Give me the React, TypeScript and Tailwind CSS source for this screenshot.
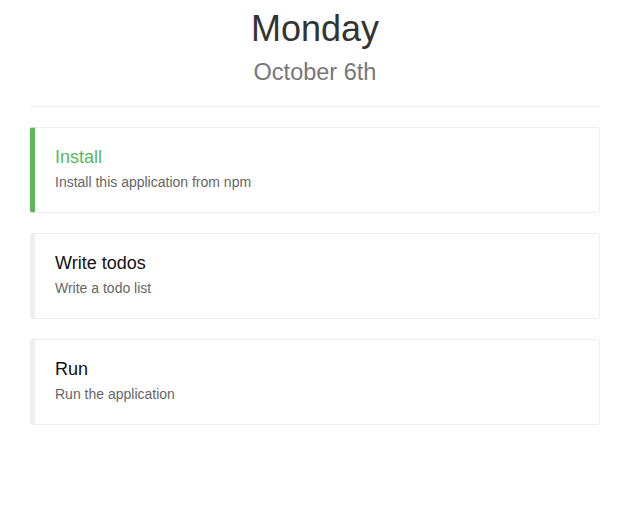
import React from "react";

const items = [
  { title: "Install", desc: "Install this application from npm", active: true },
  { title: "Write todos", desc: "Write a todo list", active: false },
  { title: "Run", desc: "Run the application", active: false },
];

export default function App() {
  return (
    <div
      className="min-h-[520px] bg-white"
      style={{ fontFamily: '"Liberation Sans", Arial, sans-serif' }}
    >
      <div className="ml-[30px] w-[570px] pt-[9px]">
        <div className="text-center">
          <h1 className="text-[36px] leading-[40px] text-[#333]">Monday</h1>
          <h2 className="mt-[10px] text-[23.5px] leading-[26px] text-[#777]">October 6th</h2>
        </div>
        <div className="mt-[21px] h-px bg-[#eee]" />
        <div className="mt-[20px] flex flex-col gap-[20px]">
          {items.map((it) => (
            <div
              key={it.title}
              className={
                "rounded-[3px] border border-[#eee] border-l-[5px] px-[20px] pt-[19px] pb-[20px] " +
                (it.active ? "border-l-[#5cb85c]" : "border-l-[#eee]")
              }
            >
              <h4
                className={
                  "text-[18px] leading-[20px] " +
                  (it.active ? "text-[#5cb85c]" : "text-[#111]")
                }
              >
                {it.title}
              </h4>
              <p className="mt-[5px] text-[14px] leading-[20px] text-[#666]">{it.desc}</p>
            </div>
          ))}
        </div>
      </div>
    </div>
  );
}
